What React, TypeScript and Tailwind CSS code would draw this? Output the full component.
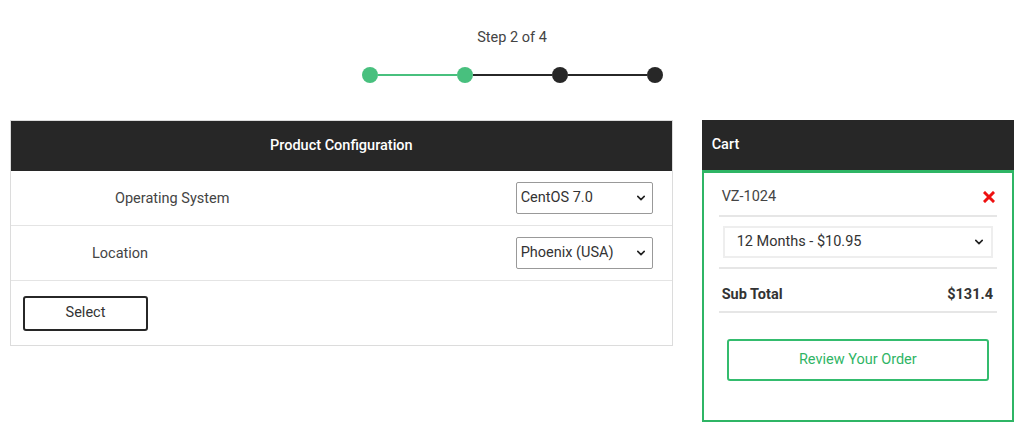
import React from 'react';

function Chevron() {
  return (
    <svg viewBox="0 0 10 6" className="w-[8px] h-[6px]" fill="none">
      <path d="M1 1l4 4 4-4" stroke="#222" strokeWidth="2" strokeLinecap="round" strokeLinejoin="round" />
    </svg>
  );
}

function FakeSelect({ value, className, chevron }: { value: string; className: string; chevron: string }) {
  return (
    <div className={`relative flex items-center ${className}`}>
      <span className="text-[14.5px] text-[#333]">{value}</span>
      <span className={`absolute top-1/2 -translate-y-1/2 flex ${chevron}`}>
        <Chevron />
      </span>
    </div>
  );
}

function Stepper() {
  const dots = [true, true, false, false];
  return (
    <div className="flex flex-col items-center pt-[29px]">
      <div className="text-[14.5px] text-[#444] leading-[18px]">Step 2 of 4</div>
      <div className="flex items-center mt-[20px]">
        {dots.map((done, i) => (
          <React.Fragment key={i}>
            {i > 0 && (
              <div className={`w-[79px] h-[2px] ${i === 1 ? 'bg-[#48c07e]' : 'bg-[#272727]'}`} />
            )}
            <div className={`w-[16px] h-[16px] rounded-full ${done ? 'bg-[#48c07e]' : 'bg-[#272727]'}`} />
          </React.Fragment>
        ))}
      </div>
    </div>
  );
}

export default function App() {
  return (
    <div className="w-[1024px] h-[442px] bg-white font-['Roboto',sans-serif] overflow-hidden">
      <Stepper />
      <div className="flex items-start px-[10px] mt-[37px] gap-[29px]">
        {/* product configuration */}
        <div className="w-[664px] border border-[#dcdcdc]">
          <div className="h-[50px] bg-[#272727] flex items-center justify-center text-white text-[14.5px] font-medium">
            Product Configuration
          </div>
          <div className="h-[55px] flex items-center justify-between border-b border-[#e4e4e4] pl-[104px] pr-[19px]">
            <span className="text-[14.5px] text-[#444] pt-[2px]">Operating System</span>
            <FakeSelect
              value="CentOS 7.0"
              chevron="right-[7px]"
              className="w-[137px] h-[32px] border border-[#999] rounded-[2px] pl-[4px]"
            />
          </div>
          <div className="h-[55px] flex items-center justify-between border-b border-[#e4e4e4] pl-[81px] pr-[19px]">
            <span className="text-[14.5px] text-[#444] pt-[2px]">Location</span>
            <FakeSelect
              value="Phoenix (USA)"
              chevron="right-[7px]"
              className="w-[137px] h-[32px] border border-[#999] rounded-[2px] pl-[4px]"
            />
          </div>
          <div className="h-[64px] flex items-center pl-[12px]">
            <button className="w-[125px] h-[35px] border-2 border-[#272727] rounded-[3px] text-[14.5px] text-[#333]">
              Select
            </button>
          </div>
        </div>

        {/* cart */}
        <div className="w-[313px]">
          <div className="h-[50px] bg-[#272727] flex items-center pl-[10px] text-white text-[14.5px] font-medium">
            Cart
          </div>
          <div className="h-[252px] border-2 border-t-[3px] border-[#2fb565] px-[15px]">
            <div className="h-[44px] flex items-center justify-between border-b-2 border-[#e6e6e6] pl-[3px] pr-[2px] pt-[5px]">
              <span className="text-[14.5px] text-[#444]">VZ-1024</span>
              <svg viewBox="0 0 12 12" className="w-[12px] h-[12px]">
                <path d="M2 2l8 8M10 2l-8 8" stroke="#ee1111" strokeWidth="3" strokeLinecap="square" />
              </svg>
            </div>
            <div className="h-[52px] flex items-center border-b-2 border-[#e6e6e6] px-[4px]">
              <FakeSelect
                value="12 Months - $10.95"
                chevron="right-[8px]"
                className="w-full h-[32px] border-2 border-[#eeeeee] pl-[12px]"
              />
            </div>
            <div className="h-[44px] flex items-center justify-between border-b-2 border-[#e6e6e6] pl-[3px] pr-[4px] pt-[9px]">
              <span className="text-[14.5px] font-bold text-[#333]">Sub Total</span>
              <span className="text-[14.5px] font-bold text-[#333]">$131.4</span>
            </div>
            <div className="flex justify-center pt-[26px]">
              <button className="w-[262px] h-[42px] border-2 border-[#34bc6e] rounded-[3px] text-[14.5px] text-[#2fb565]">
                Review Your Order
              </button>
            </div>
          </div>
        </div>
      </div>
    </div>
  );
}
